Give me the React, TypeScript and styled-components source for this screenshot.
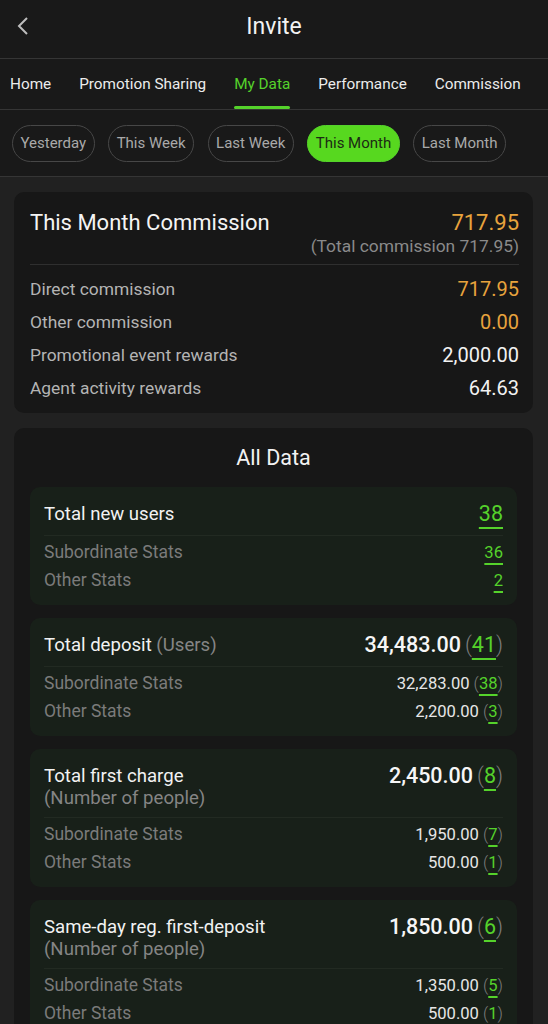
import React from "react";
import styled, { createGlobalStyle } from "styled-components";

const GREEN = "#55d22b";
const ORANGE = "#e8a33d";

const Global = createGlobalStyle`
  body { margin: 0; background: #212121; font-family: Roboto, "Noto Sans", sans-serif; color: #fff; }
  * { box-sizing: border-box; }
`;

const Page = styled.div`
  width: 548px;
  height: 1024px;
  overflow: hidden;
  background: #212121;
`;

const TopBar = styled.div`
  height: 59px;
  background: #191919;
  border-bottom: 1px solid #353535;
  display: flex;
  align-items: center;
  justify-content: center;
  position: relative;
`;

const Back = styled.div`
  position: absolute;
  left: 14px;
  top: 15px;
  width: 20px;
  height: 22px;
`;

const Title = styled.h1`
  margin: 0;
  margin-top: -6px;
  font-size: 23px;
  font-weight: 400;
  color: #f2f2f2;
`;

const Tabs = styled.div`
  height: 51px;
  background: #191919;
  border-bottom: 1px solid #353535;
  display: flex;
  gap: 28px;
  padding-left: 10px;
  white-space: nowrap;
  overflow: hidden;
`;

const Tab = styled.div<{ $active?: boolean }>`
  font-size: 15.3px;
  height: 50px;
  line-height: 50px;
  color: ${(p) => (p.$active ? GREEN : "#ececec")};
  position: relative;
  &::after {
    content: "";
    display: ${(p) => (p.$active ? "block" : "none")};
    position: absolute;
    left: 0;
    right: 0;
    bottom: 0;
    height: 3px;
    border-radius: 2px;
    background: ${GREEN};
  }
`;

const Filters = styled.div`
  height: 67px;
  background: #191919;
  border-bottom: 1px solid #353535;
  display: flex;
  align-items: center;
  gap: 13.5px;
  padding: 0 0 0 12px;
  white-space: nowrap;
  overflow: hidden;
`;

const Pill = styled.div<{ $active?: boolean }>`
  height: 37px;
  line-height: 35px;
  padding: 0 7.5px;
  border-radius: 19px;
  font-size: 15px;
  border: 1px solid ${(p) => (p.$active ? GREEN : "#474747")};
  background: ${(p) => (p.$active ? "#57d81f" : "transparent")};
  color: ${(p) => (p.$active ? "#1c2a14" : "#a9a9a9")};
`;

const Body = styled.div`
  padding: 15px 15px 0 14px;
  display: flex;
  flex-direction: column;
  gap: 15px;
`;

const Card = styled.div`
  background: #171717;
  border-radius: 10px;
  padding: 17px 14px 9px 16px;
`;

const SummaryHead = styled.div`
  display: flex;
  justify-content: space-between;
  align-items: flex-start;
  padding-bottom: 9px;
  border-bottom: 1px solid #2f2f2f;
  margin-bottom: 7px;
`;

const SummaryTitle = styled.div`
  font-size: 22px;
  line-height: 28px;
  color: #f4f4f4;
`;

const SummaryValue = styled.div`
  text-align: right;
  font-size: 22px;
  line-height: 28px;
  color: ${ORANGE};
`;

const SummaryNote = styled.div`
  font-size: 17.4px;
  line-height: 18px;
  color: #8a8a8a;
`;

const Row = styled.div`
  display: flex;
  justify-content: space-between;
  align-items: center;
  font-size: 17.4px;
  height: 33px;
`;

const Label = styled.span`
  color: #b4b4b4;
`;

const Amount = styled.span<{ $orange?: boolean }>`
  color: ${(p) => (p.$orange ? ORANGE : "#f2f2f2")};
  font-size: 20px;
`;

const DataCard = styled(Card)`
  padding: 15px 16px 20px;
  border-radius: 10px 10px 0 0;
  display: flex;
  flex-direction: column;
  gap: 13px;
`;

const DataTitle = styled.div`
  text-align: center;
  font-size: 21.5px;
  line-height: 30px;
  color: #f2f2f2;
  margin-bottom: 1px;
`;

const Stat = styled.div`
  background: #182019;
  border-radius: 10px;
  padding: 15px 14px 11px;
`;

const StatHead = styled.div`
  display: flex;
  justify-content: space-between;
  align-items: flex-start;
  padding-bottom: 9px;
  border-bottom: 1px solid #222a22;
  margin-bottom: 2px;
`;

const StatName = styled.div`
  font-size: 18.6px;
  line-height: 24px;
  color: #f2f2f2;
`;

const Muted = styled.span`
  color: #858585;
`;

const SubName = styled.div`
  font-size: 18.6px;
  line-height: 20px;
  color: #858585;
`;

const StatValue = styled.div`
  font-size: 21.5px;
  line-height: 24px;
  font-weight: 500;
  color: #f6f6f6;
  white-space: nowrap;
`;

const Count = styled.span<{ $big?: boolean }>`
  color: ${GREEN};
  text-decoration: underline;
  text-decoration-thickness: 2px;
  text-underline-offset: ${(p) => (p.$big ? "6px" : "5px")};
  font-weight: 400;
`;

const Paren = styled.span<{ $open?: boolean }>`
  color: #7d7d7d;
  font-weight: 300;
  margin-left: ${(p) => (p.$open ? "4px" : "0")};
`;

const SubRow = styled.div`
  display: flex;
  justify-content: space-between;
  align-items: center;
  height: 28px;
`;

const SubLabel = styled.span`
  color: #7b7b7b;
  font-size: 17.5px;
`;

const SubValue = styled.span`
  color: #e6e6e6;
  font-size: 16.6px;
`;

type Sub = { label: string; amount?: string; count: string };
type StatItem = { name: string; note?: string; inline?: string; amount?: string; count: string; subs: Sub[] };

const stats: StatItem[] = [
  {
    name: "Total new users",
    count: "38",
    subs: [
      { label: "Subordinate Stats", count: "36" },
      { label: "Other Stats", count: "2" },
    ],
  },
  {
    name: "Total deposit",
    inline: "(Users)",
    amount: "34,483.00",
    count: "41",
    subs: [
      { label: "Subordinate Stats", amount: "32,283.00", count: "38" },
      { label: "Other Stats", amount: "2,200.00", count: "3" },
    ],
  },
  {
    name: "Total first charge",
    note: "(Number of people)",
    amount: "2,450.00",
    count: "8",
    subs: [
      { label: "Subordinate Stats", amount: "1,950.00", count: "7" },
      { label: "Other Stats", amount: "500.00", count: "1" },
    ],
  },
  {
    name: "Same-day reg. first-deposit",
    note: "(Number of people)",
    amount: "1,850.00",
    count: "6",
    subs: [
      { label: "Subordinate Stats", amount: "1,350.00", count: "5" },
      { label: "Other Stats", amount: "500.00", count: "1" },
    ],
  },
];

const tabs = ["Home", "Promotion Sharing", "My Data", "Performance", "Commission"];
const periods = ["Yesterday", "This Week", "Last Week", "This Month", "Last Month"];

function StatCard({ item }: { item: StatItem }) {
  return (
    <Stat>
      <StatHead>
        <div>
          <StatName>
            {item.name} {item.inline && <Muted>{item.inline}</Muted>}
          </StatName>
          {item.note && <SubName>{item.note}</SubName>}
        </div>
        <StatValue>
          {item.amount ? (
            <>
              {item.amount}
              <Paren $open>(</Paren>
              <Count $big>{item.count}</Count>
              <Paren>)</Paren>
            </>
          ) : (
            <Count $big>{item.count}</Count>
          )}
        </StatValue>
      </StatHead>
      {item.subs.map((s) => (
        <SubRow key={s.label}>
          <SubLabel>{s.label}</SubLabel>
          <SubValue>
            {s.amount ? (
              <>
                {s.amount}
                <Paren $open>(</Paren>
                <Count>{s.count}</Count>
                <Paren>)</Paren>
              </>
            ) : (
              <Count>{s.count}</Count>
            )}
          </SubValue>
        </SubRow>
      ))}
    </Stat>
  );
}

export default function App() {
  return (
    <Page>
      <Global />
      <TopBar>
        <Back>
          <svg width="20" height="22" viewBox="0 0 20 22">
            <polyline points="13,3 5,11 13,19" fill="none" stroke="#bdbdbd" strokeWidth="2" />
          </svg>
        </Back>
        <Title>Invite</Title>
      </TopBar>
      <Tabs>
        {tabs.map((t) => (
          <Tab key={t} $active={t === "My Data"}>
            {t}
          </Tab>
        ))}
      </Tabs>
      <Filters>
        {periods.map((p) => (
          <Pill key={p} $active={p === "This Month"}>
            {p}
          </Pill>
        ))}
      </Filters>
      <Body>
        <Card>
          <SummaryHead>
            <SummaryTitle>This Month Commission</SummaryTitle>
            <SummaryValue>
              717.95
              <SummaryNote>(Total commission 717.95)</SummaryNote>
            </SummaryValue>
          </SummaryHead>
          <Row>
            <Label>Direct commission</Label>
            <Amount $orange>717.95</Amount>
          </Row>
          <Row>
            <Label>Other commission</Label>
            <Amount $orange>0.00</Amount>
          </Row>
          <Row>
            <Label>Promotional event rewards</Label>
            <Amount>2,000.00</Amount>
          </Row>
          <Row>
            <Label>Agent activity rewards</Label>
            <Amount>64.63</Amount>
          </Row>
        </Card>
        <DataCard>
          <DataTitle>All Data</DataTitle>
          {stats.map((s) => (
            <StatCard key={s.name} item={s} />
          ))}
        </DataCard>
      </Body>
    </Page>
  );
}
